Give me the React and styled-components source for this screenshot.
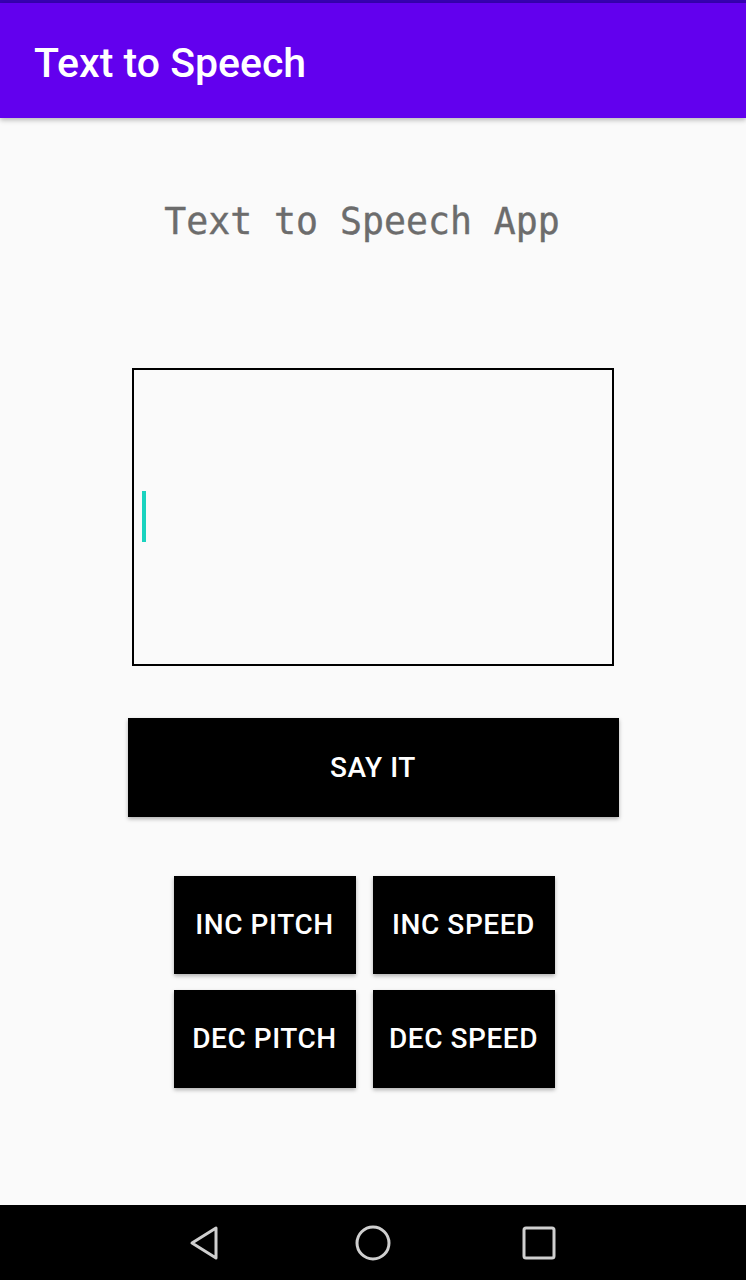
import React from 'react';
import styled, { createGlobalStyle } from 'styled-components';

const GlobalStyle = createGlobalStyle`
  html, body {
    margin: 0;
    padding: 0;
    background: #fafafa;
  }
`;

const Screen = styled.div`
  width: 746px;
  height: 1280px;
  display: flex;
  flex-direction: column;
  background: #fafafa;
  font-family: Roboto, 'Liberation Sans', sans-serif;
  overflow: hidden;
`;

const StatusStrip = styled.div`
  height: 3px;
  background: #3700b3;
  flex-shrink: 0;
`;

const AppBar = styled.header`
  height: 115px;
  flex-shrink: 0;
  background: #6200ee;
  display: flex;
  align-items: center;
  padding: 0 34px;
  box-shadow: 0 2px 5px rgba(0, 0, 0, 0.28);
  position: relative;
  z-index: 1;
`;

const AppTitle = styled.h1`
  margin: 4px 0 0;
  color: #ffffff;
  font-size: 41px;
  font-weight: 500;
  letter-spacing: 0;
`;

const Content = styled.main`
  flex: 1;
  display: flex;
  flex-direction: column;
  align-items: center;
`;

const Heading = styled.div`
  margin-top: 86px;
  margin-right: 22px;
  font-family: 'DejaVu Sans Mono', 'Liberation Mono', monospace;
  font-size: 36.5px;
  line-height: 36.5px;
  color: #6c6c6c;
  -webkit-text-stroke: 0.4px #6c6c6c;
`;

const TextBox = styled.div`
  margin-top: 127px;
  width: 482px;
  height: 298px;
  box-sizing: border-box;
  border: 2px solid #000000;
  display: flex;
  align-items: center;
  padding-left: 8px;
`;

const Caret = styled.span`
  width: 4px;
  height: 51px;
  background: #1ad3bf;
`;

const Button = styled.button`
  border: none;
  background: #000000;
  color: #ffffff;
  font-family: Roboto, 'Liberation Sans', sans-serif;
  font-weight: 500;
  font-size: 28px;
  letter-spacing: 0.02em;
  text-transform: uppercase;
  box-shadow: 0 2px 4px rgba(0, 0, 0, 0.3);
  padding: 0;
  cursor: pointer;
`;

const SayButton = styled(Button)`
  margin-top: 52px;
  width: 491px;
  height: 99px;
`;

const ControlGrid = styled.div`
  margin-top: 59px;
  margin-right: 18px;
  display: grid;
  grid-template-columns: 182px 182px;
  grid-auto-rows: 98px;
  column-gap: 17px;
  row-gap: 16px;
`;

const NavBar = styled.nav`
  height: 75px;
  flex-shrink: 0;
  background: #000000;
  display: flex;
  align-items: center;
  justify-content: center;
`;

const NavSlot = styled.div`
  width: 166px;
  display: flex;
  justify-content: center;
  align-items: center;
`;

function NavIcons() {
  const stroke = '#cfcfcf';
  return (
    <NavBar>
      <NavSlot>
        <svg width="40" height="40" viewBox="0 0 40 40">
          <path
            d="M29 5 L29 35 L5 20 Z"
            fill="none"
            stroke={stroke}
            strokeWidth="3"
            strokeLinejoin="round"
          />
        </svg>
      </NavSlot>
      <NavSlot>
        <svg width="40" height="40" viewBox="0 0 40 40">
          <circle cx="20" cy="20" r="16" fill="none" stroke={stroke} strokeWidth="3" />
        </svg>
      </NavSlot>
      <NavSlot>
        <svg width="40" height="40" viewBox="0 0 40 40">
          <rect
            x="5"
            y="5"
            width="30"
            height="30"
            rx="2"
            fill="none"
            stroke={stroke}
            strokeWidth="3"
          />
        </svg>
      </NavSlot>
    </NavBar>
  );
}

export default function App() {
  return (
    <Screen>
      <GlobalStyle />
      <StatusStrip />
      <AppBar>
        <AppTitle>Text to Speech</AppTitle>
      </AppBar>
      <Content>
        <Heading>Text to Speech App</Heading>
        <TextBox>
          <Caret />
        </TextBox>
        <SayButton>Say It</SayButton>
        <ControlGrid>
          <Button>Inc Pitch</Button>
          <Button>Inc Speed</Button>
          <Button>Dec Pitch</Button>
          <Button>Dec Speed</Button>
        </ControlGrid>
      </Content>
      <NavIcons />
    </Screen>
  );
}
